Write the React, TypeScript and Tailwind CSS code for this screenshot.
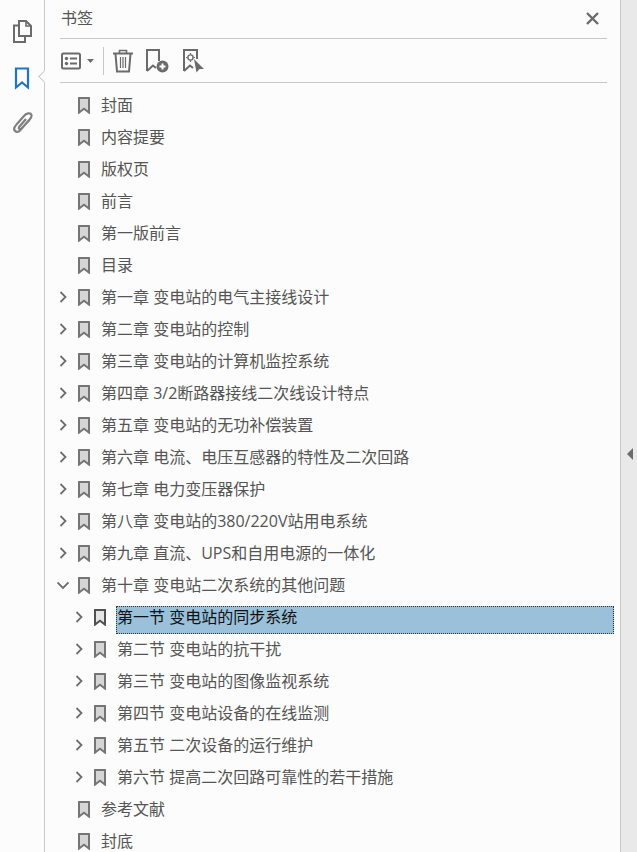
const font = { fontFamily: '"Open Sans", "Noto Sans CJK SC", sans-serif' };

type Item = { label: string; level: 0 | 1; arrow?: "right" | "down"; selected?: boolean };

const items: Item[] = [
  { label: "封面", level: 0 },
  { label: "内容提要", level: 0 },
  { label: "版权页", level: 0 },
  { label: "前言", level: 0 },
  { label: "第一版前言", level: 0 },
  { label: "目录", level: 0 },
  { label: "第一章 变电站的电气主接线设计", level: 0, arrow: "right" },
  { label: "第二章 变电站的控制", level: 0, arrow: "right" },
  { label: "第三章 变电站的计算机监控系统", level: 0, arrow: "right" },
  { label: "第四章 3/2断路器接线二次线设计特点", level: 0, arrow: "right" },
  { label: "第五章 变电站的无功补偿装置", level: 0, arrow: "right" },
  { label: "第六章 电流、电压互感器的特性及二次回路", level: 0, arrow: "right" },
  { label: "第七章 电力变压器保护", level: 0, arrow: "right" },
  { label: "第八章 变电站的380/220V站用电系统", level: 0, arrow: "right" },
  { label: "第九章 直流、UPS和自用电源的一体化", level: 0, arrow: "right" },
  { label: "第十章 变电站二次系统的其他问题", level: 0, arrow: "down" },
  { label: "第一节 变电站的同步系统", level: 1, arrow: "right", selected: true },
  { label: "第二节 变电站的抗干扰", level: 1, arrow: "right" },
  { label: "第三节 变电站的图像监视系统", level: 1, arrow: "right" },
  { label: "第四节 变电站设备的在线监测", level: 1, arrow: "right" },
  { label: "第五节 二次设备的运行维护", level: 1, arrow: "right" },
  { label: "第六节 提高二次回路可靠性的若干措施", level: 1, arrow: "right" },
  { label: "参考文献", level: 0 },
  { label: "封底", level: 0 },
];

function Arrow({ dir }: { dir?: "right" | "down" }) {
  if (!dir) return <span className="w-[12px] shrink-0" />;
  return (
    <svg width="12" height="12" viewBox="0 0 12 12" fill="none" stroke="#6e6e6e" strokeWidth="1.8" className="shrink-0">
      {dir === "right" ? <path d="M3.5 1 L8.5 6 L3.5 11" /> : <path d="M0.5 3.5 L6 9 L11.5 3.5" />}
    </svg>
  );
}

function BookmarkIcon({ dark }: { dark?: boolean }) {
  return (
    <svg width="13" height="18" viewBox="0 0 13 18" className="shrink-0">
      <path
        d="M2 2 H12 V16.6 L7 12.8 L2 16.6 Z"
        fill={dark ? "#e4e4e4" : "#d6d6d6"}
        stroke={dark ? "#505050" : "#757575"}
        strokeWidth="2"
      />
    </svg>
  );
}

function Row({ item }: { item: Item }) {
  return (
    <div className={`flex h-[32px] items-center ${item.level === 1 ? "pl-[73px]" : "pl-[57px]"}`}>
      <Arrow dir={item.arrow} />
      <span className="ml-[8px] flex">
        <BookmarkIcon dark={item.selected} />
      </span>
      {item.selected ? (
        <span className="mt-[5px] ml-[10px] flex h-[28px] w-[498px] items-center border border-dotted border-[#333] bg-[#9ac0da] pb-[5px] text-[#111]">
          {item.label}
        </span>
      ) : (
        <span className="ml-[11px] whitespace-nowrap text-[#555]">{item.label}</span>
      )}
    </div>
  );
}

function RailIcons() {
  return (
    <div className="relative h-full w-[45px] shrink-0 border-r border-[#c8c8c8]">
      <div className="flex flex-col items-center pt-[19px]">
        <svg width="22" height="24" viewBox="0 0 22 24" fill="none" stroke="#6b6b6b" strokeWidth="2">
          <path d="M8 2 H15 L20 7 V17 H8 Z" />
          <path d="M15 2 V7 H20" strokeWidth="1.6" />
          <path d="M8 6.5 H3 V23 H14 V17" />
        </svg>
        <svg width="16" height="23" viewBox="0 0 16 23" fill="none" stroke="#1f75c8" strokeWidth="2.2" className="mt-[24px]">
          <path d="M2 1.5 H14 V20.5 L8 15.5 L2 20.5 Z" />
        </svg>
        <svg width="22" height="24" viewBox="0 0 22 24" fill="none" stroke="#808080" strokeWidth="2.2" className="mt-[21px]">
          <path d="M19 8 L9 19.5 C6.5 22.5 2 20 3.5 16.5 C4 15.5 5 14 5.5 13.5 L13 5 C15 2.5 19.5 1 20.5 4 C21 6 19.5 7.5 18 9.5 L10.5 17.5 C9 19 7 17.5 8.5 15.5 L15 8" />
        </svg>
      </div>
      <span className="absolute top-[72px] right-[-5px] h-[9px] w-[9px] rotate-45 border-b border-l border-[#c8c8c8] bg-[#fcfcfc]" />
    </div>
  );
}

function Toolbar() {
  return (
    <div className="flex h-[44px] items-center border-b border-[#c8c8c8]">
      <svg width="20" height="18" viewBox="0 0 20 18" fill="none" className="ml-[1px]">
        <rect x="1" y="1.5" width="18" height="15" rx="1.5" stroke="#6b6b6b" strokeWidth="2" />
        <circle cx="5.5" cy="6.5" r="1.7" fill="#6b6b6b" />
        <circle cx="5.5" cy="11.5" r="1.7" fill="#6b6b6b" />
        <path d="M9 6.5 H16 M9 11.5 H16" stroke="#6b6b6b" strokeWidth="2" />
      </svg>
      <svg width="7" height="4" viewBox="0 0 7 4" className="ml-[6px]">
        <path d="M0 0 H7 L3.5 4 Z" fill="#6b6b6b" />
      </svg>
      <span className="ml-[9px] h-[28px] w-px bg-[#c8c8c8]" />
      <svg width="22" height="24" viewBox="0 0 22 24" fill="none" stroke="#6b6b6b" className="ml-[8px]">
        <path d="M1 4.5 H21" strokeWidth="2" />
        <path d="M7.5 4 V1.5 H14.5 V4" strokeWidth="1.6" />
        <path d="M3.5 5 L5 22.5 H17 L18.5 5" strokeWidth="2" />
        <path d="M8.5 8 V19 M11 8 V19 M13.5 8 V19" strokeWidth="1.2" />
      </svg>
      <svg width="23" height="24" viewBox="0 0 23 24" fill="none" className="ml-[12px]">
        <path d="M1 22 V1 H13 V12 M1 22 L7 16.5 L10 19" stroke="#6b6b6b" strokeWidth="2" />
        <circle cx="16.5" cy="17.5" r="6" fill="#6b6b6b" />
        <path d="M13.5 17.5 H19.5 M16.5 14.5 V20.5" stroke="#fff" strokeWidth="2" />
      </svg>
      <svg width="22" height="24" viewBox="0 0 22 24" fill="none" className="ml-[14px]">
        <path d="M1 22 V1 H14 V10 M1 22 L7 16.5 L10 19" stroke="#6b6b6b" strokeWidth="2" />
        <circle cx="7.5" cy="8.5" r="2.6" stroke="#6b6b6b" strokeWidth="1.4" />
        <path d="M7.5 4 V5.5 M7.5 11.5 V13 M3 8.5 H4.5 M10.5 8.5 H12" stroke="#6b6b6b" strokeWidth="1.2" />
        <path d="M11 10 L21 20 H16.5 L13.5 23.5 Z" fill="#6b6b6b" />
      </svg>
    </div>
  );
}

export default function App() {
  return (
    <div style={font} className="flex h-[852px] w-[637px] overflow-hidden bg-[#fcfcfc] text-[16px] leading-[24px]">
      <RailIcons />
      <div className="flex min-w-0 flex-1 flex-col">
        <div className="ml-[15px] mr-[13px] shrink-0">
          <div className="flex h-[39px] items-center justify-between border-b border-[#c8c8c8] pb-[2px]">
            <span className="pl-[1px] text-[#555]">书签</span>
            <svg width="13" height="13" viewBox="0 0 13 13" stroke="#6b6b6b" strokeWidth="2.4" className="mr-[8px]">
              <path d="M1 1 L12 12 M12 1 L1 12" />
            </svg>
          </div>
          <Toolbar />
        </div>
        <div className="-ml-[45px] pt-[6px]">
          {items.map((item) => (
            <Row key={item.label} item={item} />
          ))}
        </div>
      </div>
      <div className="flex w-[17px] shrink-0 items-start border-l border-[#c8c8c8] bg-[#e9e9e9] pt-[448px] pl-[6px]">
        <svg width="6" height="12" viewBox="0 0 6 12">
          <path d="M6 0 V12 L0 6 Z" fill="#6b6b6b" />
        </svg>
      </div>
    </div>
  );
}
